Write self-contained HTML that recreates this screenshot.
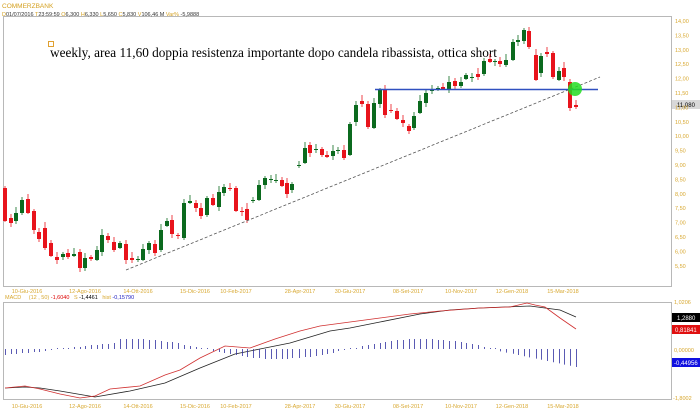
<!DOCTYPE html>
<html><head><meta charset="utf-8"><style>
html,body{margin:0;padding:0;background:#fff;width:700px;height:414px;overflow:hidden;font-family:"Liberation Sans",sans-serif}
svg{position:absolute;left:0;top:0}
</style></head><body>
<svg id="s" width="700" height="414" xmlns="http://www.w3.org/2000/svg">
<rect x="3.5" y="16.5" width="668" height="270" fill="none" stroke="#b8b8b8"/>
<rect x="3.5" y="302.5" width="668" height="97" fill="none" stroke="#b8b8b8"/>
<text x="2" y="8" font-size="6.5" fill="#d4a020">COMMERZBANK</text>
<text x="2" y="16" font-size="5.5" fill="#333"><tspan fill="#d4a020">D</tspan>01/07/2016 <tspan fill="#d4a020">T</tspan>23:59:59 <tspan fill="#d4a020">O</tspan>6,300 <tspan fill="#d4a020">H</tspan>6,330 <tspan fill="#d4a020">L</tspan>5,650 <tspan fill="#d4a020">C</tspan>5,830 <tspan fill="#d4a020">V</tspan>106,46 M <tspan fill="#d4a020">Var%</tspan> -5,9888</text>
<rect x="48.5" y="41.5" width="5" height="5" fill="none" stroke="#e0a030"/>
<text x="50" y="57" font-family="Liberation Serif,serif" font-size="13.3" textLength="447" lengthAdjust="spacingAndGlyphs" fill="#000">weekly, area 11,60 doppia resistenza importante dopo candela ribassista, ottica short</text>
<g id="c"></g>
<line x1="126" y1="270" x2="600" y2="77" stroke="#555" stroke-width="0.8" stroke-dasharray="3,2"/>
<line x1="375" y1="89.5" x2="598" y2="89.5" stroke="#3050c0" stroke-width="1.6"/>
<circle cx="575" cy="89" r="7" fill="#22dd22" fill-opacity="0.85"/>
<rect x="672" y="100" width="28" height="9" fill="#d8d8d8"/>
<text x="677" y="107" font-size="6" fill="#000">11,080</text>
<rect x="672" y="313" width="28" height="9" fill="#000"/>
<text x="677" y="320" font-size="6" fill="#fff">1,2880</text>
<rect x="672" y="325" width="28" height="9" fill="#e01010"/>
<text x="675" y="332" font-size="6" fill="#fff">0,81841</text>
<rect x="672" y="358" width="28" height="9" fill="#1010e0"/>
<text x="674" y="365" font-size="6" fill="#fff">-0,44956</text>
<g font-size="5.5" fill="#d8a830">
<text x="674" y="304">1,0206</text><text x="674" y="352">0,00000</text><text x="673" y="400">-1,8002</text>
<text x="5" y="299"><tspan>MACD</tspan> <tspan dx="6">(12 , 50)</tspan> <tspan fill="#d00">-1,6040</tspan> <tspan dx="3">S</tspan> <tspan fill="#000">-1,4461</tspan> <tspan dx="3">hist</tspan> <tspan fill="#2020c0">-0,15790</tspan></text>
</g>
<g id="ax" font-size="5.5" fill="#d8a830"></g>
<polyline fill="none" stroke="#222" stroke-width="0.8" points="5,388 25,387 40,388 60,391 95,397 130,391 165,383 200,368 235,354 260,349 290,343 330,331 350,328 380,322 420,314 450,310 480,308 505,307 530,306 545,308 560,310 576,317"/>
<polyline fill="none" stroke="#d03030" stroke-width="0.8" points="5,388 25,386 40,389 60,394 80,398 95,396 110,389 140,386 165,375 180,370 200,358 225,346 250,348 275,339 300,331 320,326 350,322 380,318 410,314 440,311 480,308 510,307 527,303 535,305 545,307 560,318 576,329"/>
<g id="h"></g>
</svg>
<script>
var NS="http://www.w3.org/2000/svg";
function el(p,t,a,txt){var e=document.createElementNS(NS,t);for(var k in a)e.setAttribute(k,a[k]);if(txt)e.textContent=txt;document.getElementById(p).appendChild(e);return e;}
var C=[[5,188,221,'r'],[11,218,223,'r'],[16,213,221,'g'],[22,200,213,'g'],[28,199,213,'r'],[34,211,230,'r'],[39,232,239,'r'],[45,228,248,'r'],[51,243,256,'r'],[57,257,260,'r'],[63,254,257,'g'],[68,253,257,'r'],[74,254,256,'g'],[80,252,268,'r'],[85,258,268,'g'],[91,257,259,'r'],[97,250,260,'g'],[102,235,252,'g'],[108,236,240,'r'],[114,242,250,'r'],[120,243,248,'g'],[126,244,260,'r'],[132,258,260,'r'],[138,259,260,'g'],[143,249,260,'g'],[149,243,250,'g'],[155,244,253,'r'],[161,230,250,'g'],[167,221,226,'g'],[172,220,234,'r'],[178,235,236,'r'],[184,203,238,'g'],[190,201,203,'g'],[196,203,208,'r'],[201,208,216,'r'],[207,198,215,'g'],[213,198,205,'r'],[219,192,207,'g'],[224,187,193,'g'],[230,188,189,'r'],[236,188,211,'r'],[242,211,212,'r'],[247,209,220,'r'],[253,200,201,'g'],[259,185,200,'g'],[265,178,185,'g'],[271,179,180,'g'],[276,180,181,'g'],[282,180,186,'r'],[287,183,194,'r'],[292,184,190,'g'],[299,165,166,'g'],[305,148,163,'g'],[310,145,153,'r'],[316,149,150,'g'],[322,149,155,'r'],[327,155,157,'r'],[333,151,156,'g'],[338,150,151,'g'],[344,150,158,'r'],[350,124,155,'g'],[356,105,122,'g'],[362,101,104,'r'],[368,104,127,'r'],[374,103,128,'g'],[380,90,104,'g'],[385,89,115,'r'],[391,110,111,'r'],[397,111,119,'r'],[403,120,123,'r'],[409,126,131,'r'],[414,116,128,'g'],[420,101,113,'g'],[426,93,103,'g'],[432,90,91,'g'],[438,88,89,'g'],[443,87,89,'r'],[449,82,89,'g'],[455,81,86,'r'],[461,82,86,'g'],[466,75,79,'g'],[472,77,78,'g'],[478,74,77,'r'],[484,61,74,'g'],[490,59,62,'r'],[495,61,62,'g'],[500,61,64,'r'],[506,60,65,'g'],[513,42,60,'g'],[518,40,42,'g'],[524,30,41,'g'],[529,31,47,'r'],[536,55,80,'r'],[541,56,73,'g'],[547,52,54,'r'],[553,53,77,'r'],[559,71,80,'g'],[564,68,77,'r'],[570,82,108,'r'],[576,105,107,'r']];
var col={r:'#e8141c',g:'#0b6a1e'};
C.forEach(function(c,i){var k=col[c[3]];var w=(i*7)%5+2;
el('c','line',{x1:c[0],x2:c[0],y1:c[1]-w,y2:c[2]+((i*3)%4)+1,stroke:k,'stroke-width':0.8});
el('c','rect',{x:c[0]-2,y:c[1],width:4,height:Math.max(1,c[2]-c[1]),fill:k});
var hv=Math.round(10*Math.sin(i/8-1.2)*(i<20?0.6:1));if(i>85)hv=-(i-84)*1.2;
el('h','line',{x1:c[0]+0.5,x2:c[0]+0.5,y1:349,y2:349-Math.max(1,Math.abs(hv))*(hv<0?-1:1),stroke:'#3030a0','stroke-width':0.8});});
for(var p=14;p>=5.5;p-=0.5){var y=21+(14-p)*28.8;el('ax','text',{x:675,y:y+2},p.toFixed(2).replace('.',','));}
var D=[[27,'10-Giu-2016'],[85,'12-Ago-2016'],[138,'14-Ott-2016'],[195,'15-Dic-2016'],[236,'10-Feb-2017'],[300,'28-Apr-2017'],[350,'30-Giu-2017'],[408,'08-Set-2017'],[461,'10-Nov-2017'],[512,'12-Gen-2018'],[563,'15-Mar-2018']];
D.forEach(function(d){el('ax','text',{x:d[0],y:293,'text-anchor':'middle'},d[1]);el('ax','text',{x:d[0],y:408,'text-anchor':'middle'},d[1]);});
</script>
</body></html>
